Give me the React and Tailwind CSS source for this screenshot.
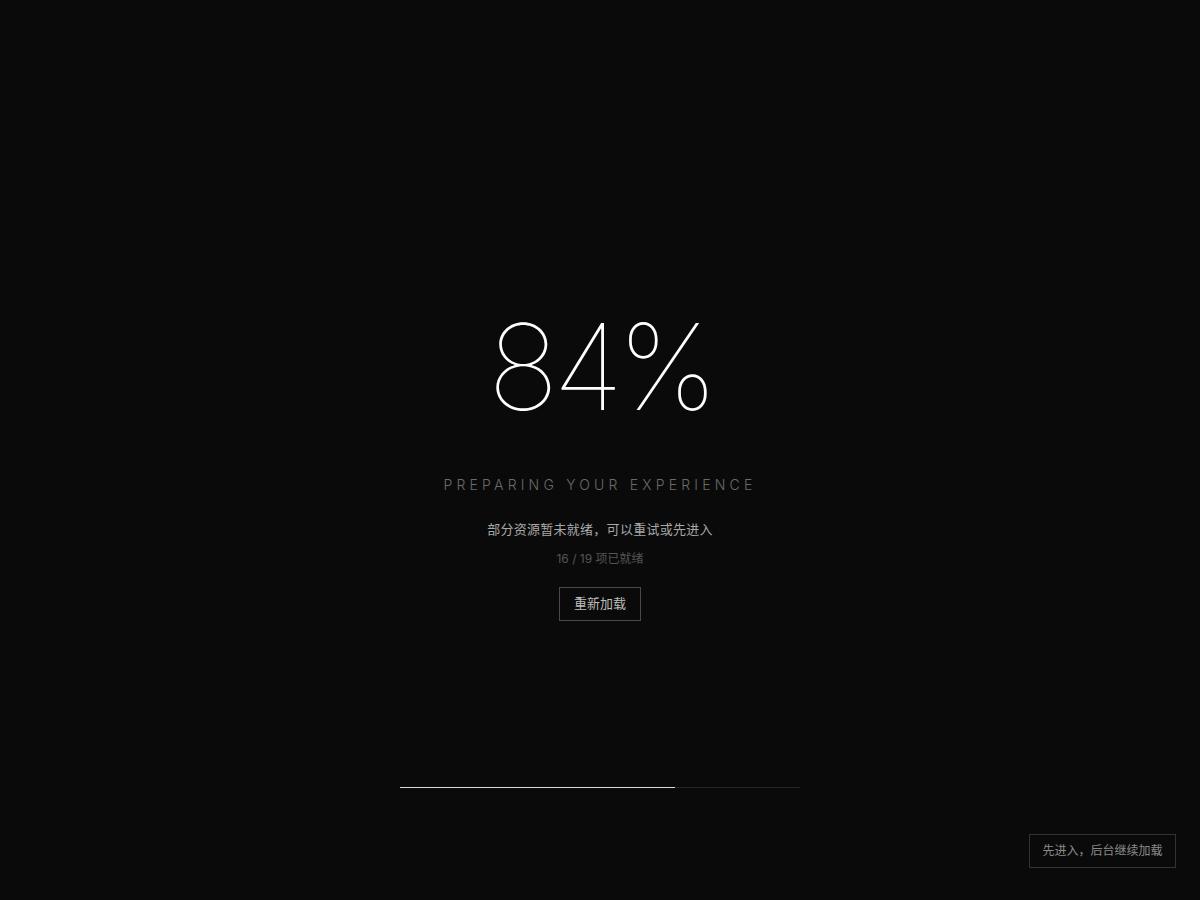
import React from "react";

const loaded = 16;
const total = 19;

export default function App() {
  return (
    <div
      className="relative h-[900px] w-full overflow-hidden bg-[#0a0a0a] text-white"
      style={{ fontFamily: 'Inter, "Noto Sans CJK SC", sans-serif' }}
    >
      <div className="flex flex-col items-center pt-[292px]">
        <h1 className="text-[119px] font-thin leading-[150px] tracking-[-0.05em] text-white">
          84%
        </h1>
        <p className="mt-[33px] text-[14px] font-light tracking-[0.3em] text-[#6b6b6b] leading-5">
          PREPARING YOUR EXPERIENCE
        </p>
        <p className="mt-[24px] text-[13px] tracking-[0.02em] text-[#a8a8a8] leading-5">
          部分资源暂未就绪，可以重试或先进入
        </p>
        <p className="mt-[10px] text-[12px] text-[#555] leading-5">
          {loaded} / {total} 项已就绪
        </p>
        <button className="mt-[18px] h-[34px] w-[82px] border border-[#4a4a4a] text-[13px] text-[#bdbdbd]">
          重新加载
        </button>
        <div className="mt-[166px] h-px w-[400px] bg-[#262626]">
          <div className="h-px w-[275px] bg-[#d9d9d9]" />
        </div>
      </div>
      <button className="absolute bottom-[32px] right-[24px] h-[34px] w-[147px] border border-[#333] text-[12px] text-[#8a8a8a]">
        先进入，后台继续加载
      </button>
    </div>
  );
}
